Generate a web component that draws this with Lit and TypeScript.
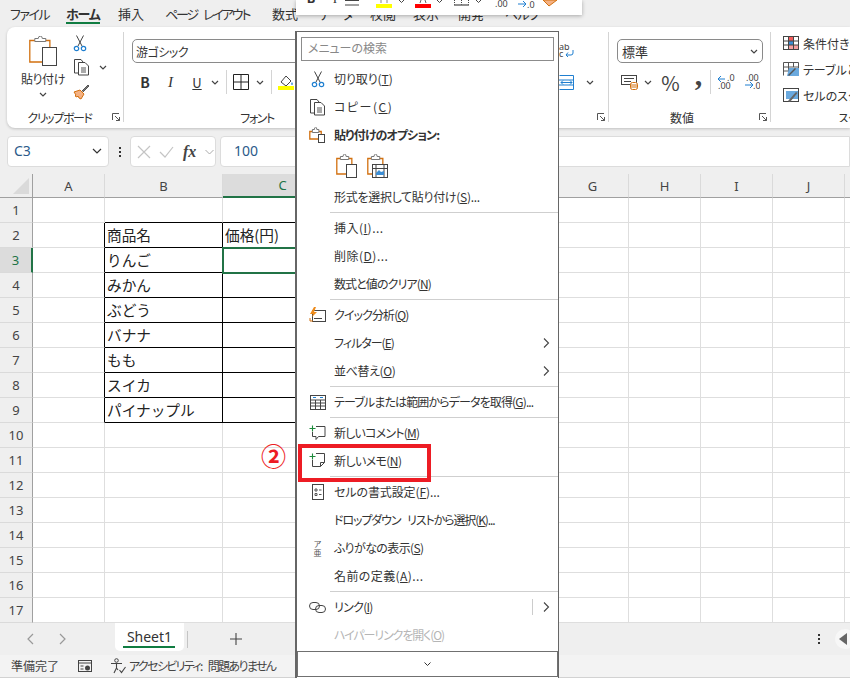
import { LitElement, html, css, svg, nothing } from "lit";
import { customElement } from "lit/decorators.js";

const S = (w: number, h: number, body: unknown, cls = "") =>
  html`<svg class=${cls} width=${w} height=${h} viewBox="0 0 ${w} ${h}" fill="none">${body}</svg>`;

const chev = S(8, 5, svg`<path d="M1 1l3 3 3-3" stroke="#444" stroke-width="1.2"/>`);
const launcher = S(8, 8, svg`<path d="M.5 7V.5H7M3 3l4.5 4.5M7.5 4v3.5H4" stroke="#555"/>`);

const scissors = S(14, 17, svg`<path d="M3.5 .5L9 11M10.500 .5L5 11" stroke="#444"/><circle cx="3.500" cy="13.500" r="2.200" stroke="#1f7fd0" stroke-width="1.200"/><circle cx="10.500" cy="13.500" r="2.200" stroke="#1f7fd0" stroke-width="1.200"/>`);
const copyI = S(17, 17, svg`<path d="M5 14H1.500V.5H8l2 2.500" stroke="#444"/><path d="M5.500 3.500h6.500l3.500 3.500v9h-10z" fill="#fff" stroke="#444"/><path d="M8 9h5M8 11h5M8 13h5" stroke="#555"/>`);
const brush = S(17, 17, svg`<path d="M1 9l6-2 4 4-3 5-2-1-1-2-1 1-2-1 1-1z" fill="#f4b183" stroke="#d2700f"/><path d="M9 8l6-6 1 1-6 6" fill="#777" stroke="#555"/>`);
const clip = (w: number, h: number, extra: unknown) =>
  S(w, h, svg`<path d="M${w * 0.55} ${h - 4}H.8V4.500H${w * 0.72}V${h * 0.45}" stroke="#d2700f" stroke-width="1.300"/><path d="M${w * 0.2} 4.500V2.500h${w * 0.12}a${w * 0.06} 2 0 0 1 ${w * 0.14} 0h${w * 0.12}v3h-${w * 0.38}z" fill="#fff" stroke="#777"/>${extra}`);
const bigPaste = clip(29, 30, svg`<rect x="13.500" y="11.500" width="14" height="18" fill="#fff" stroke="#444"/>`);
const menuPaste = clip(17, 16, svg`<rect x="9.500" y="7.500" width="6" height="8" fill="#fff" stroke="#444"/>`);
const paste1 = clip(22, 24, svg`<rect x="10.500" y="10.500" width="10" height="13" fill="#fff" stroke="#444"/>`);
const paste2 = clip(22, 24, svg`<rect x="5.500" y="10.500" width="15" height="13" fill="#fff" stroke="#444"/><path d="M5.500 14.500h15M9 10.500v13M17 10.500v13" stroke="#444"/><path d="M9 19l3-3 2 2 3-1v4H9z" fill="#3d8ed4"/>`);
const quick = S(17, 16, svg`<rect x="3.500" y="3.500" width="13" height="11" stroke="#444"/><path d="M5 11.500h8" stroke="#444"/><path d="M5 0L1 7h3l-1 3 5-5H5l2-5z" fill="#ed8b1c"/><path d="M1 11v3h3" stroke="#d2700f"/>`);
const tableI = S(16, 15, svg`<rect x=".5" y=".5" width="15" height="14" stroke="#444"/><path d="M.5 5h15M.5 8h15M.5 11h15M5.500 5v10M10.500 5v10" stroke="#444"/><path d="M3 2.500h3M10 2.500h3" stroke="#1f7fd0"/>`);
const comment = S(17, 16, svg`<path d="M7 1.500h9v10H9.500L7 14.500v-3H3.500V7" stroke="#444"/><path d="M3.500 .5v6M.5 3.500h6" stroke="#1c8a3a" stroke-width="1.100"/>`);
const memo = S(17, 16, svg`<path d="M7 .5h8.500v9l-4 4h-8V7" stroke="#444"/><path d="M11.500 13.500v-4h4" stroke="#444"/><path d="M3.500 .5v6M.5 3.500h6" stroke="#1c8a3a" stroke-width="1.100"/>`);
const cellFmt = S(12, 16, svg`<rect x=".5" y=".5" width="11" height="15" stroke="#444"/><path d="M3 5h2v2H3zM3 9.500h2v2H3zM7 6h2.500M7 10.500h2.500" stroke="#555"/>`);
const linkI = S(17, 11, svg`<rect x=".5" y=".5" width="10" height="7" rx="3.500" stroke="#444"/><rect x="6.500" y="3.500" width="10" height="7" rx="3.500" stroke="#444"/>`);
const right = S(7, 10, svg`<path d="M1 .5L5.500 5 1 9.500" stroke="#444" stroke-width="1.100"/>`);
const borders = (sz: number) => S(sz, sz, svg`<path d="M.5 .5H${sz - .5}V${sz - .5}H.5zM${sz / 2} 0V${sz}M0 ${sz / 2}H${sz}" stroke="#222"/>`);
const fill = S(16, 16, svg`<path d="M3 8l5-6 5 5-5 5z" stroke="#444"/><path d="M14 8c1 1.500 1 3 0 3s-1-1.500 0-3z" fill="#1f7fd0"/><rect y="12" width="16" height="4" fill="#ffff00"/>`);
const cond = S(16, 14, svg`<rect x=".5" y=".5" width="15" height="13" fill="#fff" stroke="#444"/><rect x="5" y="1" width="6" height="4" fill="#f25c5c"/><rect x="6" y="5" width="5" height="4" fill="#3d8ed4"/><rect x="5" y="9" width="10" height="4" fill="#f7a0a0"/><path d="M5.500 0v14M10.500 0v14M0 5h16M0 9h16" stroke="#444"/>`);
const tblFmt = S(16, 14, svg`<path d="M.5 13.500V.5h15v8M.5 5h15M.5 9h6M5.500 0v13M10.500 0v5" stroke="#555"/><path d="M6 6h10v8H4z" fill="#6aa9de"/><path d="M5 13l7-7 1 1-7 7z" fill="#555"/>`);
const cellSt = S(16, 14, svg`<rect x=".5" y=".5" width="15" height="13" stroke="#444"/><path d="M3 3h12v8H3z" fill="#6aa9de"/><path d="M5 13l8-9 1.500 1L7 14z" fill="#666"/>`);
const currency = S(17, 15, svg`<rect x=".5" y=".5" width="15" height="9" stroke="#444"/><path d="M3 3.500h10M3 6.500h7" stroke="#444"/><rect x="9.500" y="7.500" width="7" height="7" rx="2" fill="#fff" stroke="#d2700f"/><path d="M9.500 10h7M9.500 12h7" stroke="#d2700f"/>`);
const decDec = S(18, 16, svg`<path d="M1 5h7M4 2L1 5l3 3" stroke="#1f7fd0"/><text x="10" y="7" class="tiny">.0</text><text x="1" y="15" class="tiny">.00</text>`);
const decInc = S(16, 16, svg`<text x="2" y="7" class="tiny">.00</text><path d="M1 11h8M6 8l3 3-3 3" stroke="#1f7fd0"/><text x="9" y="15" class="tiny">.0</text>`);
const wrapI = S(16, 13, svg`<text x="0" y="6" class="tiny">ab</text><text x="0" y="13" class="tiny">c</text><path d="M14 6v3a2 2 0 0 1-2 2H7M9 8.500L7 11l2 2" stroke="#1f7fd0"/>`);
const mergeI = S(15, 15, svg`<path d="M.5 .5h14v14H.5M0 5h15M0 10h15" stroke="#1f7fd0"/><path d="M2 7.500h11M4 5.500l-2 2 2 2M11 5.500l2 2-2 2" stroke="#1f7fd0"/>`);
const viewI = S(14, 14, svg`<rect x=".5" y="1.500" width="13" height="11" stroke="#444"/><path d="M.5 4h13M2.500 7h3M2.500 10h3" stroke="#444"/><circle cx="9.500" cy="9" r="2.500" fill="#444"/>`);
const accI = S(16, 16, svg`<circle cx="6.500" cy="2.500" r="1.800" stroke="#444"/><path d="M1 5.500h11M6.500 5v5M6.500 10L4 15M6.500 10L8 12M9.500 12l2 2.500L15.500 9" stroke="#444" stroke-width="1.100"/>`);

type It = { t?: string; a?: string; e?: string; ls?: number; icon?: unknown; sub?: boolean; sep?: boolean; bold?: boolean; off?: boolean; paste?: boolean; bar?: boolean };
const items: It[] = [
  { t: "切り取り", a: "T", icon: scissors, ls: -0.1 },
  { t: "コピー", a: "C", icon: copyI, ls: 1.5 },
  { t: "貼り付けのオプション:", bold: true, icon: menuPaste, ls: -0.9 },
  { paste: true },
  { t: "形式を選択して貼り付け", a: "S", e: "...", ls: -0.3 },
  { sep: true },
  { t: "挿入", a: "I", e: "...", ls: 0.5 },
  { t: "削除", a: "D", e: "...", ls: 0.5 },
  { t: "数式と値のクリア", a: "N", ls: -0.9 },
  { sep: true },
  { t: "クイック分析", a: "Q", icon: quick, ls: -0.9 },
  { t: "フィルター", a: "E", sub: true, ls: -1 },
  { t: "並べ替え", a: "O", sub: true, ls: -0.4 },
  { sep: true },
  { t: "テーブルまたは範囲からデータを取得", a: "G", e: "...", icon: tableI, ls: -0.87 },
  { sep: true },
  { t: "新しいコメント", a: "M", icon: comment, ls: -0.8 },
  { t: "新しいメモ", a: "N", icon: memo, ls: -0.6 },
  { sep: true },
  { t: "セルの書式設定", a: "F", e: "...", icon: cellFmt, ls: -0.1 },
  { t: "ドロップダウン リストから選択", a: "K", e: "...", ls: -1.1 },
  { t: "ふりがなの表示", a: "S", icon: html`<span class="furi">ア<br />亜</span>`, ls: -0.6 },
  { t: "名前の定義", a: "A", e: "...", ls: 0.4 },
  { sep: true },
  { t: "リンク", a: "I", icon: linkI, sub: true, bar: true, ls: -0.7 },
  { t: "ハイパーリンクを開く", a: "O", off: true, ls: -1.1 },
];

/* tab label, letter spacing, start-to-start width */
const tabs: [string, number, number][] = [
  ["ファイル", -1.5, 56], ["ホーム", -1.2, 52], ["挿入", 0, 47], ["ページ レイアウト", -2.1, 107], ["数式", 0, 47],
  ["データ", -0.8, 51], ["校閲", 0, 43], ["表示", 0, 45], ["開発", 0, 47], ["ヘルプ", -0.8, 60],
];

const miniItems: [number, unknown][] = [
  [30, html`<span class="gl">B</span>`],
  [18, html`<span class="gl il">I</span>`],
  [24, S(15, 15, svg`<path d="M1 .5h14M1 5h14" stroke="#444"/>`)],
  [8, nothing],
  [39, S(30, 15, svg`<rect y="4" width="16" height="4" fill="#ffff00"/><path d="M5 0v3M11 0v3" stroke="#888"/><path d="M23 0l2.500 2.500L28 0" stroke="#444"/>`)],
  [39, S(30, 15, svg`<rect y="4" width="16" height="4" fill="#ff0000"/><path d="M5 3l1-3M11 3l-1-3" stroke="#666"/><path d="M22 0l2.500 2.500L27 0" stroke="#444"/>`)],
  [41, S(30, 15, svg`<path d="M.5 0v4.500M14.500 0v4.500M7.500 0v4.500" stroke="#444" stroke-dasharray="1 1"/><path d="M0 5h15" stroke="#222"/><path d="M22 0l2.500 2.500L27 0" stroke="#444"/>`)],
  [22, S(20, 15, svg`<text x="0" y="7" class="tiny">.00</text>`)],
  [25, S(18, 15, svg`<path d="M1 4h8M6 1l3 3-3 3" stroke="#1f7fd0"/><text x="10" y="7.500" class="tiny">.0</text>`)],
  [16, S(16, 15, svg`<path d="M1 0l6 6 8-6z" fill="#f4b183" stroke="#d2700f"/>`)],
];

const cols = ["A", "B", "C", "D", "E", "F", "G", "H", "I", "J", "K"];
const names = ["商品名", "りんご", "みかん", "ぶどう", "バナナ", "もも", "スイカ", "パイナップル"];

@customElement("app-root")
export class AppRoot extends LitElement {
  static styles = css`
    :host { display: block; width: 850px; height: 678px; position: relative; overflow: hidden; background: #efefef;
      font-family: "Noto Sans", "Noto Sans CJK JP", sans-serif; color: #333; font-size: 12px; }
    * { box-sizing: border-box; }
    svg { flex: none; }
    .jp { font-family: "Noto Sans CJK JP", sans-serif; font-feature-settings: "palt" 1; }
    .tiny { font: 9px "Noto Sans", sans-serif; fill: #444; }
    .tabs { height: 27px; display: flex; font-size: 13px; line-height: 27px; padding-left: 10px; font-family: "Noto Sans CJK JP", sans-serif; font-feature-settings: "palt" 1; white-space: nowrap; }
    .tab { flex: none; color: #333; }
    .tab span { position: relative; display: inline-block; word-spacing: 5px; }
    .tab.on span { font-weight: 700; }
    .tab.on span::after { content: ""; position: absolute; left: 0; right: 0; top: 22px; height: 2px; background: #107c41; }
    .ribbon { margin-left: 7px; height: 101px; background: #fff; border-radius: 8px 0 0 8px; box-shadow: 0 1px 3px rgba(0,0,0,.2); display: flex; overflow: hidden; padding: 5px 0 6px; }
    .group { display: flex; flex-direction: column; border-right: 1px solid #d4d4d4; flex: none; height: 90px; }
    .gbody { flex: 1; display: flex; min-height: 0; }
    .glabel { height: 10px; margin-top: auto; display: flex; align-items: center; font-size: 12px; padding-right: 3px; letter-spacing: -0.4px; }
    .glabel .lbl { flex: 1; text-align: center; }
    .glabel .lbl.tight { letter-spacing: -1.4px; }
    .glabel .lbl.num { padding-right: 12px; letter-spacing: 0; }
    .g-clip { width: 117px; }
    .paste { width: 65px; padding-left: 7px; display: flex; flex-direction: column; align-items: center; padding-top: 4px; }
    .paste .t { margin-top: 3px; line-height: 20px; letter-spacing: -0.4px; }
    .paste svg:last-child { margin-top: 3px; }
    .small { display: flex; flex-direction: column; align-items: flex-start; padding: 3px 0 0 1px; gap: 7px; }
    .small .r { display: flex; align-items: center; gap: 9px; }
    .g-font { width: 262px; padding-left: 8px; }
    .fsel, .nsel { height: 24px; border: 1px solid #8a8a8a; border-radius: 5px; display: flex; align-items: center; padding: 0 3px; font-size: 12px; justify-content: space-between; }
    .fsel { width: 180px; margin-top: 7px; letter-spacing: -0.5px; }
    .tools { display: flex; align-items: center; height: 38px; }
    .b { font-weight: 700; font-size: 14px; width: 26px; text-align: center; }
    .i { font-style: italic; font-family: "Liberation Serif", serif; font-size: 15px; width: 25px; text-align: center; }
    .u { text-decoration: underline; font-size: 13px; width: 28px; text-align: center; }
    .vs { width: 1px; height: 24px; background: #d4d4d4; margin: 0 6px 0 7px; }
    .sp7 { width: 7px; } .sp6 { width: 6px; } .sp11 { width: 9px; }
    .spacer { flex: none; width: 172px; }
    .g-align { width: 51px; border-right: 1px solid #d4d4d4; }
    .ali { padding: 12px 0 0 1px; display: flex; flex-direction: column; gap: 18px; }
    .ali .r { display: flex; align-items: center; gap: 12px; }
    .g-num { width: 162px; padding-left: 8px; }
    .nsel { width: 146px; margin-top: 7px; padding: 0 4px; font-size: 13px; }
    .num-tools { display: flex; align-items: center; height: 38px; padding-left: 4px; }
    .pct { font-size: 20px; width: 27px; text-align: center; margin-left: 5px; color: #444; }
    .cma { font: 700 30px/26px "Liberation Serif", serif; width: 26px; padding-left: 3px; text-align: center; margin-top: -15px; color: #444; }
    .vs.tight { margin: 0 6px 0 0; }
    .g-style { flex: 1; padding-left: 12px; border: 0; overflow: hidden; white-space: nowrap; }
    .sty { display: flex; flex-direction: column; gap: 12px; padding-top: 4px; height: 72px; }
    .sty .r { display: flex; align-items: center; gap: 4px; height: 14px; font-size: 12px; }
    .stylbl { margin-left: 55px; }
    .fbar { display: flex; margin: 8px 0 7px; height: 31px; padding-left: 7px; align-items: stretch; }
    .box { background: #fff; border: 1px solid #dcdcdc; border-radius: 4px; display: flex; align-items: center; }
    .nm { width: 102px; font-size: 14px; padding: 0 6px 2px; justify-content: space-between; color: #2b5a8a; }
    .dots { width: 21px; display: flex; flex-direction: column; align-items: center; justify-content: center; gap: 2px; }
    .dots i { width: 2px; height: 2px; background: #333; display: block; }
    .fx { width: 86px; padding-left: 6px; gap: 7px; }
    .fx .ck { margin-left: 1px; }
    .fxt { font: italic 700 16px "Liberation Serif", serif; color: #444; margin-left: 2px; width: 15px; }
    .val { flex: 1; margin-left: 4px; border-radius: 4px 0 0 4px; padding: 0 0 2px 13px; font-size: 14px; color: #2b5a8a; }
    .grid { display: grid; grid-template-columns: 33px 72px 118px 120px 72px 72px 70px 72px 72px 72px 72px 72px; grid-template-rows: 24px repeat(17, 25px); width: 850px; overflow: hidden; height: 449px; background: #fff; }
    .hd { background: #efefef; border-right: 1px solid #dadada; border-bottom: 1px solid #a0a0a0; display: flex; align-items: center; justify-content: center; font-size: 13px; color: #444; }
    .corner { border-right: 1px solid #a0a0a0; display: flex; align-items: flex-end; justify-content: flex-end; padding: 0 3px 3px 0; }
    .hd.sel { background: #dcdcdc; color: #217346; border-bottom: 2px solid #217346; }
    .rh { background: #efefef; border-right: 1px solid #a0a0a0; border-bottom: 1px solid #dadada; display: flex; align-items: center; justify-content: center; font-size: 13px; color: #444; }
    .rh.sel { background: #dcdcdc; color: #217346; border-right: 2px solid #217346; }
    .c { border-right: 1px solid #dedede; border-bottom: 1px solid #dedede; font: 14.67px/24px "Noto Sans CJK JP", sans-serif; padding-left: 2px; color: #222; white-space: nowrap; overflow: hidden; }
    .c.br { border-right-color: #000; }
    .c.bb { border-bottom-color: #000; }
    .c.act { outline: 2px solid #217346; outline-offset: -1px; position: relative; }
    .sheets { height: 32px; display: flex; align-items: center; background: #efefef; position: relative; padding-left: 26px; }
    .nav { display: flex; gap: 25px; width: 89px; }
    .stab { width: 69px; height: 28px; align-self: flex-start; background: #fff; border-radius: 0 0 5px 5px; font-size: 14px; text-align: center; line-height: 27px; position: relative; color: #333; }
    .stab::after { content: ""; position: absolute; left: 8px; right: 9px; bottom: 3px; height: 2px; background: #107c41; }
    .ssep { width: 1px; height: 17px; background: #c4c4c4; margin-left: 3px; }
    .plus { margin-left: 41px; width: 14px; display: flex; }
    .sr { margin-left: auto; display: flex; align-items: center; gap: 2px; }
    .vdots { display: flex; flex-direction: column; gap: 2px; margin-right: 13px; }
    .vdots i { width: 2px; height: 2px; background: #333; display: block; }
    .circ { width: 20px; height: 20px; border-radius: 50%; background: #f7f7f7; margin-right: -5px; display: flex; align-items: center; padding-left: 4px; }
    .status { height: 23px; background: #f3f3f3; display: flex; align-items: center; padding: 0 0 1px 11px; font-size: 12px; color: #444; border-bottom: 1px solid #d2d2d2; white-space: nowrap; }
    .status .rd { width: 67px; }
    .status .ac { margin-left: 18px; margin-right: 3px; display: flex; }
    .status .msg { letter-spacing: -1.65px; word-spacing: 5px; }
    .menu { position: absolute; left: 295px; top: 31px; width: 264px; height: 647px; background: #fff; border: 1px solid #666; border-bottom: 0; border-left-width: 2px; padding: 5px 4px 0 4px; font-size: 12px; color: #333; }
    .search { height: 24px; width: 253px; border: 1px solid #8c8c8c; color: #888; line-height: 20px; padding-left: 6px; margin-bottom: 4px; margin-left: 0; }
    .mi { height: 28px; display: flex; align-items: center; position: relative; margin-left: -4px; margin-right: -4px; }
    .mic { width: 37px; flex: none; display: flex; justify-content: center; padding-left: 4px; }
    .mt { white-space: nowrap; line-height: 28px; word-spacing: 5px; }
    .mi.bold .mt { font-weight: 700; }
    .mi.off { color: #b5b5b5; }
    .msub { position: absolute; left: 246px; top: 9px; display: flex; }
    .mbar { position: absolute; left: 235px; top: 6px; width: 1px; height: 16px; background: #ccc; }
    .mp { height: 34px; padding: 5px 0 0 39px; display: flex; gap: 9px; margin-left: -4px; margin-right: -4px; }
    .ms { height: 1px; background: #cfcfcf; margin: 1px -4px 1px 29px; }
    .furi { font-size: 8px; line-height: 9px; color: #555; text-align: center; display: block; }
    .more { position: absolute; left: 0; right: 0; bottom: 1px; height: 26px; border: 1px solid #707070; display: flex; align-items: center; justify-content: center; background: #fff; }
    .mini { position: absolute; left: 296px; top: 0; width: 286px; height: 15px; background: #fff; box-shadow: 0 1px 4px rgba(0,0,0,.3); overflow: hidden; display: flex; }
    .mini .g { height: 15px; flex: none; display: flex; overflow: hidden; justify-content: flex-start; }
    .mini .g.ctr { justify-content: center; }
    .mini .gl { font-size: 13px; line-height: 13px; margin-top: -8px; font-weight: 700; color: #333; }
    .mini .gl.il { font-weight: 400; font-family: "Liberation Serif", serif; }
    .redbox { position: absolute; left: 298px; top: 444px; width: 133px; height: 38px; border: 4px solid #ed1c24; pointer-events: none; }
    .two { position: absolute; left: 261px; top: 439px; font: 700 25px/32px "Noto Sans CJK JP", sans-serif; color: #ed1c24; }
  `;

  private renderMenu() {
    return html`<div class="menu jp">
      <div class="search">メニューの検索</div>
      ${items.map((it) => {
        if (it.sep) return html`<div class="ms"></div>`;
        if (it.paste) return html`<div class="mp">${paste1}${paste2}</div>`;
        return html`<div class="mi ${it.bold ? "bold" : ""} ${it.off ? "off" : ""}">
          <span class="mic">${it.icon ?? nothing}</span>
          <span class="mt" style="letter-spacing:${it.ls ?? 0}px">${it.t}${it.a ? html`(<u>${it.a}</u>)` : nothing}${it.e ?? ""}</span>
          ${it.bar ? html`<span class="mbar"></span>` : nothing}
          ${it.sub ? html`<span class="msub">${right}</span>` : nothing}
        </div>`;
      })}
      <div class="more">${S(7, 4, svg`<path d="M.5 .5L3.500 3.500 6.500 .5" stroke="#333"/>`)}</div>
    </div>`;
  }

  private renderMini() {
    return html`<div class="mini">
      ${miniItems.map(([w, c], i) => html`<span class="g ${i < 2 ? "ctr" : ""}" style="width:${w}px">${c}</span>`)}
    </div>`;
  }

  private renderGrid() {
    const cells: unknown[] = [];
    cells.push(html`<div class="hd corner">${S(16, 16, svg`<path d="M16 0v16H0z" fill="#dadada"/>`)}</div>`);
    cols.forEach((n, i) => cells.push(html`<div class="hd ${i === 2 ? "sel" : ""}">${n}</div>`));
    for (let r = 1; r <= 17; r++) {
      cells.push(html`<div class="rh ${r === 3 ? "sel" : ""}">${r}</div>`);
      cols.forEach((_, c) => {
        const inRows = r >= 2 && r <= 9;
        const br = inRows && (c === 0 || c === 1 || c === 2);
        const bb = r >= 1 && r <= 9 && (c === 1 || c === 2);
        let txt = "";
        if (c === 1 && inRows) txt = names[r - 2];
        if (c === 2 && r === 2) txt = "価格(円)";
        const act = c === 2 && r === 3;
        cells.push(html`<div class="c ${br ? "br" : ""} ${bb ? "bb" : ""} ${act ? "act" : ""}">${txt}</div>`);
      });
    }
    return html`<div class="grid">${cells}</div>`;
  }

  render() {
    return html`
      <div class="tabs">
        ${tabs.map(([t, ls, w], i) => html`<div class="tab ${i === 1 ? "on" : ""}" style="width:${w}px"><span style="letter-spacing:${ls}px">${t}</span></div>`)}
      </div>

      <div class="ribbon jp">
        <div class="group g-clip">
          <div class="gbody">
            <div class="paste">${bigPaste}<span class="t">貼り付け</span>${chev}</div>
            <div class="small">
              ${scissors}
              <div class="r">${copyI}${chev}</div>
              ${brush}
            </div>
          </div>
          <div class="glabel"><span class="lbl tight">クリップボード</span>${launcher}</div>
        </div>

        <div class="group g-font">
          <div class="fsel">游ゴシック</div>
          <div class="tools">
            <span class="b">B</span><span class="i">I</span><span class="u">U</span>${chev}
            <span class="vs"></span>${borders(16)}<span class="sp7"></span>${chev}
            <span class="vs"></span>${fill}
          </div>
          <div class="glabel"><span class="lbl tight">フォント</span></div>
        </div>

        <div class="spacer"></div>

        <div class="group g-align">
          <div class="gbody">
            <div class="ali">${wrapI}<div class="r">${mergeI}${chev}</div></div>
          </div>
          <div class="glabel"><span class="lbl"></span>${launcher}</div>
        </div>

        <div class="group g-num">
          <div class="nsel"><span>標準</span>${chev}</div>
          <div class="num-tools">
            ${currency}<span class="sp6"></span>${chev}
            <span class="pct">%</span><span class="cma">,</span>
            <span class="vs tight"></span>${decDec}<span class="sp11"></span>${decInc}
          </div>
          <div class="glabel"><span class="lbl num">数値</span>${launcher}</div>
        </div>

        <div class="group g-style">
          <div class="sty">
            <div class="r">${cond}条件付き書式</div>
            <div class="r">${tblFmt}テーブルとして書式設定</div>
            <div class="r">${cellSt}セルのスタイル</div>
          </div>
          <div class="glabel"><span class="stylbl">スタイル</span></div>
        </div>
      </div>

      <div class="fbar">
        <div class="box nm"><span>C3</span>${S(10, 6, svg`<path d="M1 1l4 4 4-4" stroke="#333" stroke-width="1.200"/>`)}</div>
        <div class="dots"><i></i><i></i><i></i></div>
        <div class="box fx">
          ${S(14, 14, svg`<path d="M1 1l12 12M13 1L1 13" stroke="#c4c4c4" stroke-width="1.200"/>`)}
          ${S(15, 12, svg`<path d="M1 6l5 5 8-10" stroke="#c4c4c4" stroke-width="1.200"/>`, "ck")}
          <span class="fxt">fx</span>
          ${S(9, 6, svg`<path d="M.5 1l4 4 4-4" stroke="#aaa"/>`)}
        </div>
        <div class="box val">100</div>
      </div>

      ${this.renderGrid()}

      <div class="sheets">
        <div class="nav">
          ${S(8, 12, svg`<path d="M7 1L2 6l5 5" stroke="#999" stroke-width="1.200"/>`)}
          ${S(8, 12, svg`<path d="M1 1l5 5-5 5" stroke="#999" stroke-width="1.200"/>`)}
        </div>
        <div class="stab">Sheet1</div>
        <span class="ssep"></span>
        <span class="plus">${S(14, 14, svg`<path d="M7 1v12M1 7h12" stroke="#444" stroke-width="1.100"/>`)}</span>
        <div class="sr">
          <div class="vdots"><i></i><i></i><i></i></div>
          <div class="circ">${S(9, 12, svg`<path d="M8 0v12L0 6z" fill="#666"/>`)}</div>
        </div>
      </div>

      <div class="status jp">
        <span class="rd">準備完了</span>${viewI}
        <span class="ac">${accI}</span><span class="msg">アクセシビリティ: 問題ありません</span>
      </div>

      ${this.renderMini()}
      ${this.renderMenu()}
      <div class="redbox"></div>
      <div class="two">②</div>
    `;
  }
}
